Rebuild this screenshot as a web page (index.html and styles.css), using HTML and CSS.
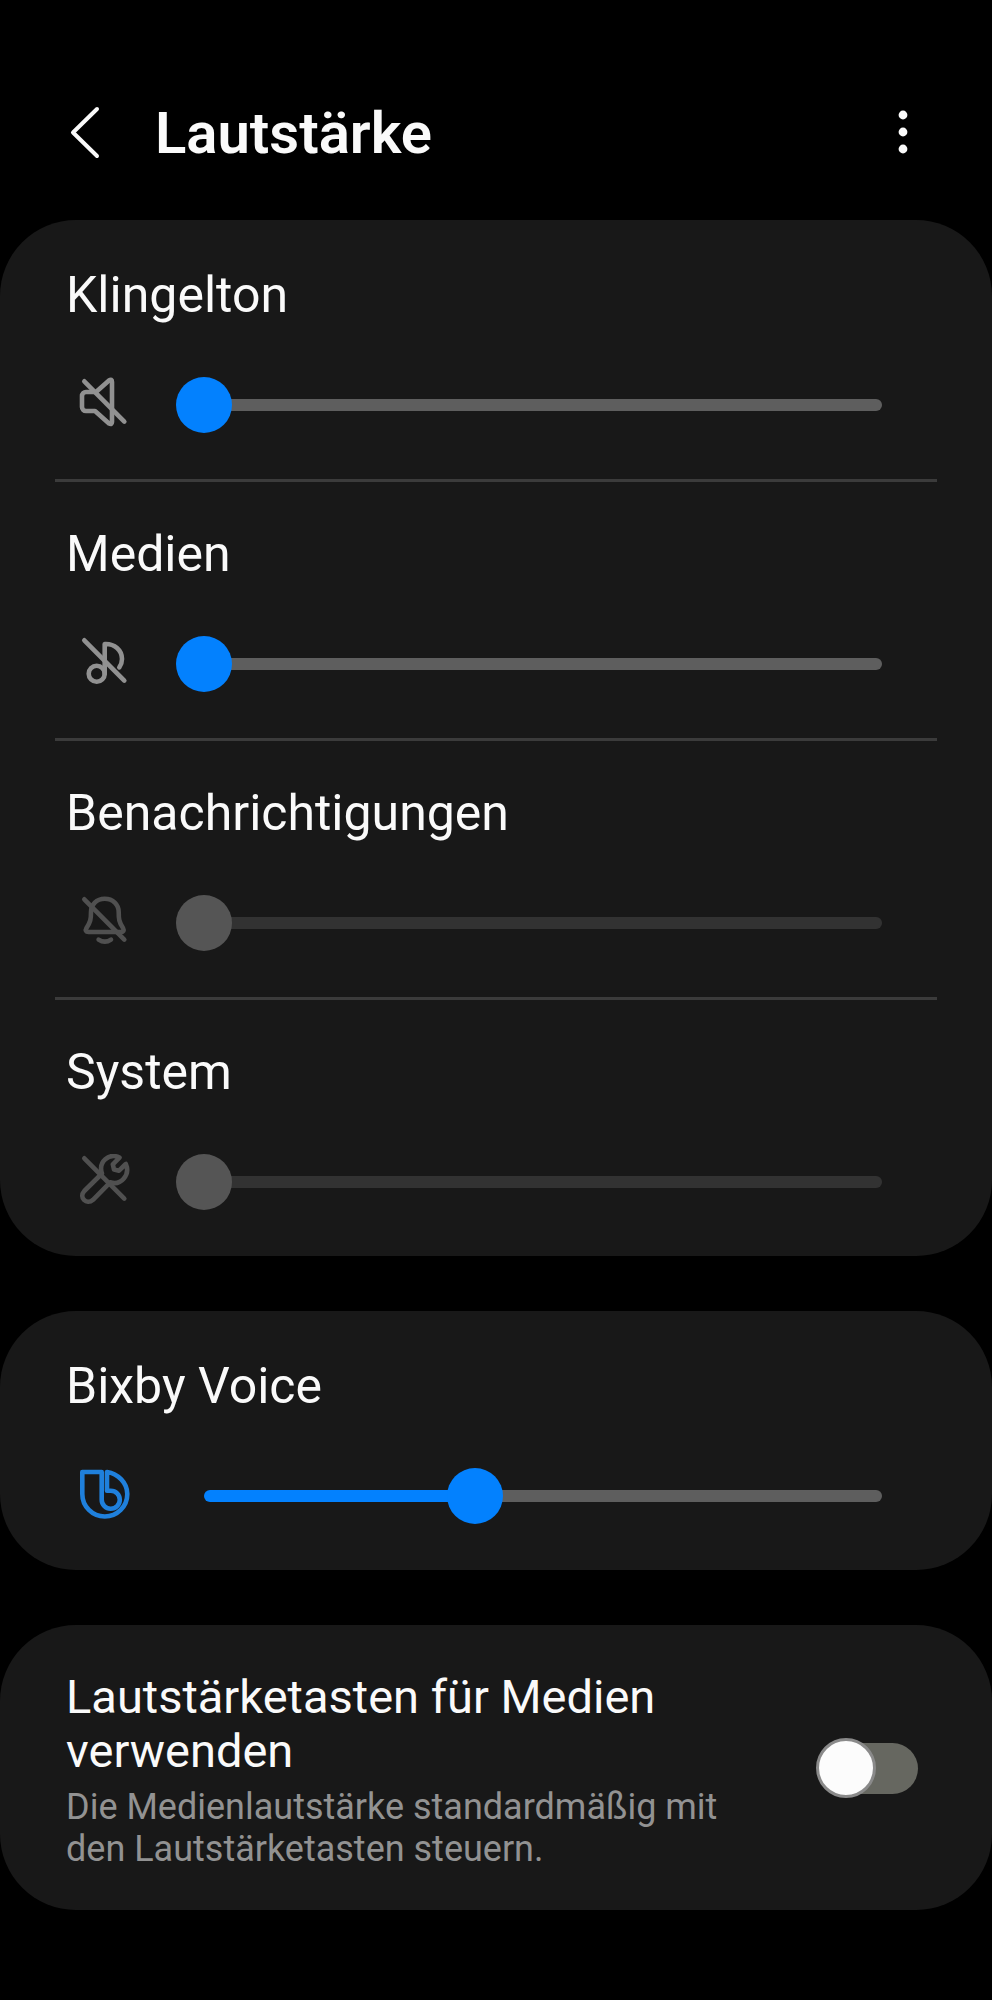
FILE: index.html
```html
<!DOCTYPE html>
<html lang="de">
<head>
    <meta charset="UTF-8">
    <meta name="viewport" content="width=device-width, initial-scale=1.0">
    <title>Lautstärke</title>

    <link rel="stylesheet" href="styles.css">
</head>
<body>
    <header class="header">
        <button class="icon-btn" type="button" aria-label="Zurück">
            <svg width="60" height="60" viewBox="0 0 60 60">
                <path class="line" d="M42 7 L18 30.5 L42 54"/>
            </svg>
        </button>
        <h1>Lautstärke</h1>
        <button class="icon-btn" type="button" aria-label="Weitere Optionen">
            <svg width="60" height="60" viewBox="0 0 60 60">
                <circle class="dot" cx="30" cy="13" r="4.4"/>
                <circle class="dot" cx="30" cy="30" r="4.4"/>
                <circle class="dot" cx="30" cy="47" r="4.4"/>
            </svg>
        </button>
    </header>

    <main>
        <section class="card">
            <div class="row">
                <label for="ringtone">Klingelton</label>
                <div class="control">
                    <svg class="icon" viewBox="0 0 56 56">
                        <path d="M20 15 H10 a4 4 0 0 0 -4 4 V30 a4 4 0 0 0 4 4 H19 L33 46.5 Q36 48 36 45 V5 Q36 1.5 33 3.5 Z"/>
                        <path d="M8.3 4.3 L48.3 44.6"/>
                    </svg>
                    <div class="slider" style="--value: 0%">
                        <input type="range" id="ringtone" min="0" max="100" value="0">
                    </div>
                </div>
            </div>

            <div class="row">
                <label for="media">Medien</label>
                <div class="control">
                    <svg class="icon" viewBox="0 0 56 56">
                        <circle cx="20.7" cy="37.7" r="8"/>
                        <path d="M28.7 37.7 V8 C38.5 7.5 46 14 46 23 C46 26 45 29 43.3 31.3"/>
                        <path d="M8.3 4.3 L48.3 44.6"/>
                    </svg>
                    <div class="slider" style="--value: 0%">
                        <input type="range" id="media" min="0" max="100" value="0">
                    </div>
                </div>
            </div>

            <div class="row disabled">
                <label for="notifications">Benachrichtigungen</label>
                <div class="control">
                    <svg class="icon" viewBox="0 0 56 56">
                        <path d="M28.7 3.7 C20.5 3.7 15 9.5 15 17 C15 24 14.5 27 10.5 33 C9 35.5 10 37 12.5 37 H45 C47.5 37 48.3 35.5 47 33 C43 27 42.7 24 42.7 17 C42.7 9.5 37 3.7 28.7 3.7 Z"/>
                        <path d="M22.6 44.6 Q28.9 48.8 35 44.6"/>
                        <path d="M8.3 4.3 L48.3 44.6"/>
                    </svg>
                    <div class="slider" style="--value: 0%">
                        <input type="range" id="notifications" min="0" max="100" value="0" disabled>
                    </div>
                </div>
            </div>

            <div class="row disabled">
                <label for="system">System</label>
                <div class="control">
                    <svg class="icon" viewBox="0 0 56 56">
                        <path d="M43.5 3.6 C33 -1.5 22 8 26 19.5 L8.3 37 C2.5 43.5 10.5 51.5 17 45.8 L34.2 28.3 C45 32 54.5 20.5 49.8 10 L43 16.7 L38 15.6 L36.8 10.3 Z"/>
                        <path d="M8.3 4.3 L48.3 44.6"/>
                    </svg>
                    <div class="slider" style="--value: 0%">
                        <input type="range" id="system" min="0" max="100" value="0" disabled>
                    </div>
                </div>
            </div>
        </section>

        <section class="card">
            <div class="row">
                <label for="bixby">Bixby Voice</label>
                <div class="control">
                    <svg class="icon bixby" viewBox="0 0 56 56">
                        <path d="M25.7 4 H6.3 V26 a22.5 22.5 0 0 0 45 0 C51.3 15 42 5.5 31 4 V22.7 H34.8 a9 9 0 0 1 0 18 a9 9 0 0 1 -9.1 -9 Z"/>
                    </svg>
                    <div class="slider" style="--value: 40%">
                        <input type="range" id="bixby" min="0" max="100" value="40">
                    </div>
                </div>
            </div>
        </section>

        <section class="card setting">
            <div class="setting-text">
                <label for="mediaKeys">Lautstärketasten für Medien verwenden</label>
                <p id="mediaKeysHint">Die Medienlautstärke standardmäßig mit den Lautstärketasten steuern.</p>
            </div>
            <input class="switch" type="checkbox" role="switch" id="mediaKeys" aria-describedby="mediaKeysHint">
        </section>
    </main>

    <script>
        // Keep the coloured part of each track in step with its thumb
        document.querySelectorAll(".slider input").forEach((input) => {
            input.addEventListener("input", () => {
                input.parentElement.style.setProperty("--value", input.value + "%");
            });
        });
    </script>
</body>
</html>
```

FILE: styles.css
```css
/* General Styles */
*,
*::before {
    box-sizing: border-box;
}

body {
    margin: 0;
    min-height: 100vh;
    background: #000;
    color: #fafafa;
    font-family: Roboto, sans-serif;
}

/* Header */
.header {
    display: flex;
    align-items: center;
    padding: 92px 59px 49px 55px;
}

h1 {
    flex: 1;
    margin: 0 0 0 40px;
    padding-top: 3px;
    font-size: 58px;
    line-height: 76px;
    font-weight: 600;
}

.icon-btn {
    display: flex;
    padding: 0;
    border: none;
    background: none;
    cursor: pointer;
}

.line {
    fill: none;
    stroke: #fafafa;
    stroke-width: 4;
    stroke-linecap: round;
    stroke-linejoin: round;
}

.dot {
    fill: #fafafa;
}

/* Cards */
main {
    display: flex;
    flex-direction: column;
    gap: 55px;
}

.card {
    padding: 0 55px;
    border-radius: 76px;
    background: #181818;
}

/* Volume Rows */
.row {
    display: flex;
    flex-direction: column;
    gap: 52px;
    padding: 42px 27px 46px 11px;
    border-top: 3px solid transparent;
}

.row + .row {
    border-top-color: #3b3b3b;
}

.row label {
    font-size: 50px;
    line-height: 60px;
}

.control {
    display: flex;
    align-items: center;
    gap: 44px;
    padding-left: 10px;
}

/* Icons */
.icon {
    width: 56px;
    height: 56px;
    fill: none;
    stroke: #919191;
    stroke-width: 4.6;
    stroke-linecap: round;
    stroke-linejoin: round;
}

.disabled .icon {
    stroke: #505050;
}

.icon.bixby {
    stroke: #1f80dc;
}

/* Sliders */
.slider {
    --fill: #0381fe;
    --track: #5e5e5e;
    --thumb: #0381fe;
    flex: 1;
    display: grid;
    align-items: center;
}

.disabled .slider {
    --track: #323232;
    --thumb: #555;
}

.slider::before {
    content: "";
    grid-area: 1 / 1;
    height: 12px;
    margin: 0 28px;
    border-radius: 6px;
    background: linear-gradient(to right, var(--fill) var(--value), var(--track) var(--value));
}

.slider input {
    grid-area: 1 / 1;
    appearance: none;
    width: 100%;
    height: 56px;
    margin: 0;
    background: none;
    cursor: pointer;
}

.slider input::-webkit-slider-thumb {
    appearance: none;
    width: 56px;
    height: 56px;
    border-radius: 50%;
    background: var(--thumb);
}

.slider input::-moz-range-thumb {
    width: 56px;
    height: 56px;
    border: none;
    border-radius: 50%;
    background: var(--thumb);
}

/* Setting with Switch */
.setting {
    display: flex;
    align-items: center;
    gap: 60px;
    padding: 41px 74px 40px 66px;
}

.setting-text {
    flex: 1;
    padding-top: 4px;
}

.setting-text label {
    display: block;
    font-size: 47px;
    line-height: 54px;
}

.setting-text p {
    margin: 8px 0 0;
    color: #929292;
    font-size: 36px;
    line-height: 42px;
}

.switch {
    appearance: none;
    display: flex;
    align-items: center;
    width: 98px;
    height: 51px;
    margin: 0;
    border-radius: 26px;
    background: #666760;
    cursor: pointer;
}

.switch::before {
    content: "";
    width: 60px;
    height: 60px;
    margin-left: -4px;
    flex-shrink: 0;
    border: 3px solid #8a8a8a;
    border-radius: 50%;
    background: #fcfcfc;
}

.switch:checked {
    justify-content: flex-end;
    background: #0381fe;
}
```
